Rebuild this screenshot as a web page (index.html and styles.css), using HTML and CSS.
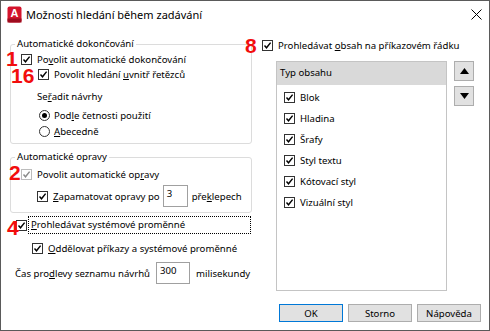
FILE: index.html
```html
<!DOCTYPE html>
<html lang="cs">
<head>
  <meta charset="UTF-8" />
  <meta name="viewport" content="width=device-width, initial-scale=1.0" />
  <title>Možnosti hledání během zadávání</title>
  <link rel="stylesheet" href="styles.css">
</head>
<body>
  <div class="dialog">
    <div class="titlebar">
      <svg class="app-icon" width="15" height="17" viewBox="0 0 15 17">
        <rect x="0.5" y="0.5" width="14" height="16" rx="2" fill="#d4142c" />
        <rect x="0.5" y="12.5" width="14" height="4" fill="#9e0c1e" />
        <text x="7.5" y="11" text-anchor="middle" font-family="Liberation Sans, sans-serif" font-weight="bold" font-size="11" fill="#fff">A</text>
      </svg>
      <span class="title">Možnosti hledání během zadávání</span>
      <svg class="close" width="11" height="11" viewBox="0 0 11 11">
        <path d="M0.5 0.5 L10.5 10.5 M10.5 0.5 L0.5 10.5" stroke="#000" stroke-width="1" />
      </svg>
    </div>

    <div class="main">
      <div class="left">
        <fieldset class="group g1">
          <legend>Automatické dokončování</legend>
          <div class="row r-auto">
            <span class="cb"><svg viewBox="0 0 9 9"><path d="M1.5 4.5 L3.5 6.8 L7.6 1.6" /></svg></span>
            <span>Po<u>v</u>olit automatické dokončování</span>
          </div>
          <div class="row r-inside">
            <span class="cb"><svg viewBox="0 0 9 9"><path d="M1.5 4.5 L3.5 6.8 L7.6 1.6" /></svg></span>
            <span>Povolit hledání <u>u</u>vnitř řetězců</span>
          </div>
          <div class="row r-sort">Se<u>ř</u>adit návrhy</div>
          <div class="row r-radio1">
            <span class="rb on"></span>
            <span>Pod<u>l</u>e četnosti použití</span>
          </div>
          <div class="row r-radio2">
            <span class="rb"></span>
            <span><u>A</u>becedně</span>
          </div>
        </fieldset>

        <fieldset class="group g2">
          <legend>Automatické opravy</legend>
          <div class="row r-auto">
            <span class="cb dis"><svg viewBox="0 0 9 9"><path d="M1.5 4.5 L3.5 6.8 L7.6 1.6" /></svg></span>
            <span>Povolit automatické op<u>r</u>avy</span>
          </div>
          <div class="row r-remember">
            <span class="cb"><svg viewBox="0 0 9 9"><path d="M1.5 4.5 L3.5 6.8 L7.6 1.6" /></svg></span>
            <span><u>Z</u>apamatovat opravy po</span>
            <span class="field f-small">3</span>
            <span>pře<u>k</u>lepech</span>
          </div>
        </fieldset>

        <div class="row r-sysvar">
          <span class="cb"><svg viewBox="0 0 9 9"><path d="M1.5 4.5 L3.5 6.8 L7.6 1.6" /></svg></span>
          <span class="focus"><u>P</u>rohledávat systémové proměnné</span>
        </div>
        <div class="row r-split">
          <span class="cb"><svg viewBox="0 0 9 9"><path d="M1.5 4.5 L3.5 6.8 L7.6 1.6" /></svg></span>
          <span><u>O</u>ddělovat příkazy a systémové proměnné</span>
        </div>
        <div class="row r-delay">
          <span>Čas pro<u>d</u>levy seznamu návrhů</span>
          <span class="field f-wide">300</span>
          <span>milisekundy</span>
        </div>
      </div>

      <div class="right">
        <div class="row r-content">
          <span class="cb"><svg viewBox="0 0 9 9"><path d="M1.5 4.5 L3.5 6.8 L7.6 1.6" /></svg></span>
          <span>Prohledávat <u>o</u>bsah na příkazovém řádku</span>
        </div>
        <div class="list-area">
          <div class="list">
            <div class="list-head">Typ obsahu</div>
            <div class="list-row"><span class="cb"><svg viewBox="0 0 9 9"><path d="M1.5 4.5 L3.5 6.8 L7.6 1.6" /></svg></span><span>Blok</span></div>
            <div class="list-row"><span class="cb"><svg viewBox="0 0 9 9"><path d="M1.5 4.5 L3.5 6.8 L7.6 1.6" /></svg></span><span>Hladina</span></div>
            <div class="list-row"><span class="cb"><svg viewBox="0 0 9 9"><path d="M1.5 4.5 L3.5 6.8 L7.6 1.6" /></svg></span><span>Šrafy</span></div>
            <div class="list-row"><span class="cb"><svg viewBox="0 0 9 9"><path d="M1.5 4.5 L3.5 6.8 L7.6 1.6" /></svg></span><span>Styl textu</span></div>
            <div class="list-row"><span class="cb"><svg viewBox="0 0 9 9"><path d="M1.5 4.5 L3.5 6.8 L7.6 1.6" /></svg></span><span>Kótovací styl</span></div>
            <div class="list-row"><span class="cb"><svg viewBox="0 0 9 9"><path d="M1.5 4.5 L3.5 6.8 L7.6 1.6" /></svg></span><span>Vizuální styl</span></div>
          </div>
          <div class="arrows">
            <button class="arrow"><svg width="9" height="6" viewBox="0 0 9 6"><path d="M4.5 0 L9 6 L0 6 Z" /></svg></button>
            <button class="arrow"><svg width="9" height="6" viewBox="0 0 9 6"><path d="M0 0 L9 0 L4.5 6 Z" /></svg></button>
          </div>
        </div>
      </div>
    </div>

    <div class="footer">
      <button class="btn default">OK</button>
      <button class="btn">Storno</button>
      <button class="btn">Nápověda</button>
    </div>

    <!-- znacky z navodu -->
    <span class="mark m1">1</span>
    <span class="mark m16">16</span>
    <span class="mark m2">2</span>
    <span class="mark m4">4</span>
    <span class="mark m8">8</span>
  </div>
</body>
</html>
```

FILE: styles.css
```css
* {
  box-sizing: border-box;
}
body {
  margin: 0;
  font-family: "Noto Sans", "Open Sans", sans-serif;
  font-size: 9.6px;
  color: #000;
  background: #fff;
}
.dialog {
  position: relative;
  width: 490px;
  height: 331px;
  border: 1px solid #5a5a5a;
  background: #fff;
  display: flex;
  flex-direction: column;
}
.titlebar {
  height: 27px;
  display: flex;
  align-items: center;
  padding-left: 6px;
}
.app-icon {
  margin-right: 4px;
}
.title {
  flex: 1;
  font-size: 11px;
}
.close {
  margin-right: 7px;
}

.main {
  flex: 1;
  display: flex;
  padding: 9px 0 0 9px;
}
.left {
  width: 242px;
}
.right {
  margin-left: 10px;
}

.row {
  display: flex;
  align-items: center;
  height: 14px;
  white-space: nowrap;
}

/* zaskrtavatko */
.cb {
  width: 11px;
  height: 11px;
  border: 1px solid #333;
  background: #fff;
  margin-right: 5px;
  display: flex;
  align-items: center;
  justify-content: center;
  flex-shrink: 0;
}
.cb svg {
  width: 9px;
  height: 9px;
  fill: none;
  stroke: #000;
  stroke-width: 1.4;
}
.cb.dis {
  border-color: #bcbcbc;
}
.cb.dis svg {
  stroke: #8a8a8a;
}
.rb {
  width: 11px;
  height: 11px;
  border: 1px solid #333;
  border-radius: 50%;
  margin-right: 4px;
  display: flex;
  align-items: center;
  justify-content: center;
}
.rb.on::after {
  content: "";
  width: 5px;
  height: 5px;
  border-radius: 50%;
  background: #000;
}

.group {
  margin: 0;
  padding: 0 0 5px 10px;
  border: 1px solid #dcdcdc;
  border-radius: 3px;
  width: 242px;
}
.group legend {
  padding: 0 2px;
  margin-left: -6px;
  line-height: 14px;
}
.g1 .r-auto {
  margin-top: 1px;
}
.r-inside {
  margin-top: 1px;
  padding-left: 17px;
}
.r-sort {
  margin-top: 8px;
  padding-left: 16px;
}
.r-radio1 {
  margin-top: 5px;
  padding-left: 18px;
}
.r-radio2 {
  margin-top: 2px;
  padding-left: 18px;
}
.g2 {
  margin-top: 6px;
}
.g2 .r-auto {
  margin-top: 3px;
}
.r-remember {
  height: 22px;
  margin-top: 4px;
  padding-left: 16px;
}
.field {
  height: 22px;
  border: 1px solid #a0a0a0;
  padding: 1px 3px;
  line-height: 14px;
  align-self: flex-start;
}
.f-small {
  width: 25px;
  margin: 0 4px 0 3px;
}
.f-wide {
  width: 34px;
  margin: 0 6px 0 6px;
}

.r-sysvar {
  height: 18px;
  margin-top: 3px;
  padding-left: 6px;
}
.r-sysvar .cb {
  margin-right: 1px;
}
.focus {
  flex: 1;
  height: 18px;
  border: 1px dotted #000;
  padding-left: 2px;
  margin-right: 1px;
  line-height: 16px;
}
.r-split {
  margin-top: 7px;
  padding-left: 22px;
}
.r-delay {
  height: 22px;
  margin-top: 7px;
  padding-left: 5px;
}

.r-content {
  margin-top: 1px;
}
.list-area {
  display: flex;
  margin: 9px 0 0 14px;
}
.list {
  width: 171px;
  height: 230px;
  border: 1px solid #c4c4c4;
}
.list-head {
  height: 23px;
  background: #d9d9d9;
  padding-left: 3px;
  line-height: 22px;
}
.list-head + .list-row {
  margin-top: 2px;
}
.list-row {
  display: flex;
  align-items: center;
  height: 21px;
  padding-left: 7px;
}
.arrows {
  display: flex;
  flex-direction: column;
  gap: 5px;
  margin-left: 7px;
}
.arrow {
  width: 20px;
  height: 20px;
  padding: 0;
  border: 1px solid #adadad;
  background: #e1e1e1;
  display: flex;
  align-items: center;
  justify-content: center;
}

.footer {
  display: flex;
  justify-content: flex-end;
  gap: 5px;
  padding: 0 8px 8px 0;
}
.btn {
  width: 64px;
  height: 18px;
  padding: 0;
  border: 1px solid #adadad;
  background: #e1e1e1;
  font-family: inherit;
  font-size: 9.6px;
  color: #000;
}
.btn.default {
  border-color: #0078d7;
}

.mark {
  position: absolute;
  font-family: "Liberation Sans", Arial, sans-serif;
  font-weight: bold;
  font-size: 21px;
  line-height: 15px;
  color: #f20d0d;
}
.m1 {
  left: 5px;
  top: 50px;
}
.m16 {
  left: 10px;
  top: 67px;
}
.m2 {
  left: 8px;
  top: 164px;
}
.m4 {
  left: 6px;
  top: 219px;
}
.m8 {
  left: 244px;
  top: 37px;
}
```
